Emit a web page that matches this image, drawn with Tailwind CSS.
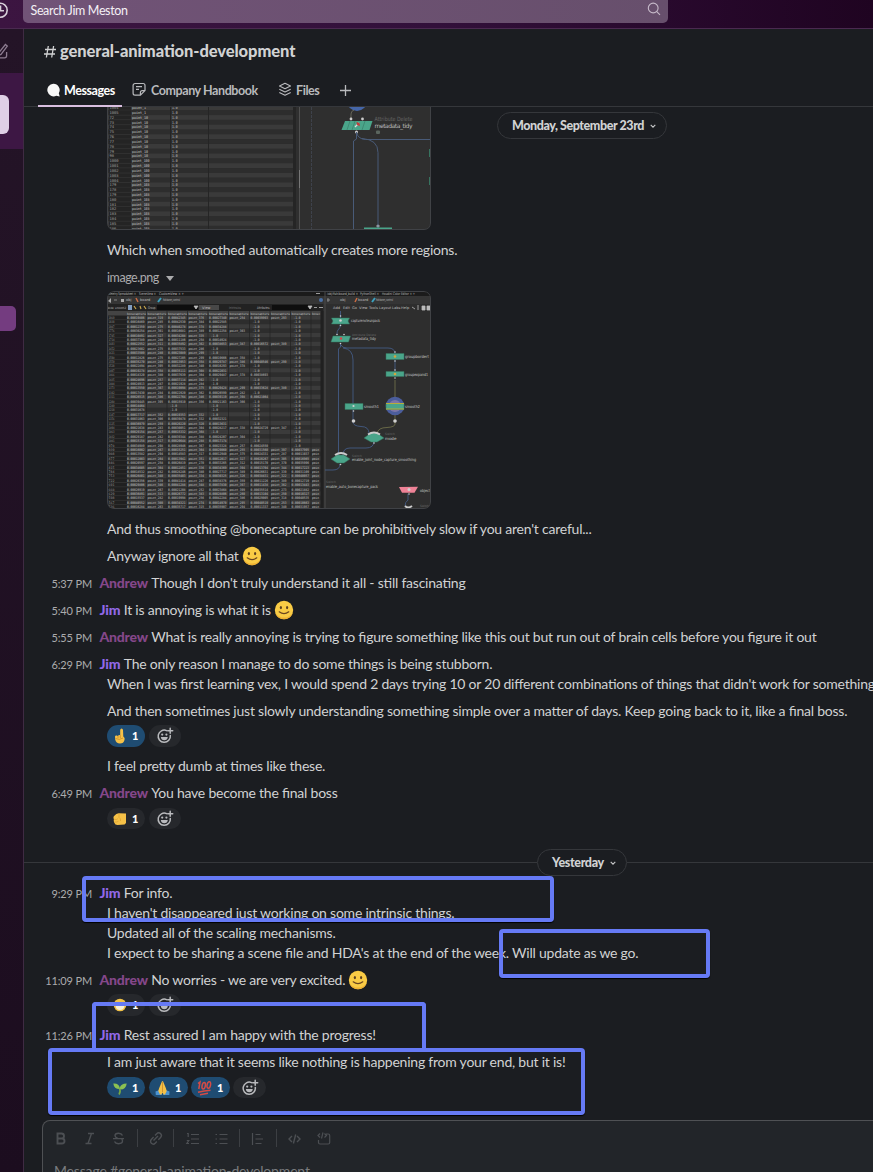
<!DOCTYPE html>
<html lang="en">
<head>
  <meta charset="UTF-8">
  <meta name="viewport" content="width=device-width, initial-scale=1.0">
  <title>general-animation-development</title>
  <script src="https://cdn.jsdelivr.net/npm/@tailwindcss/browser@4"></script>
</head>
<body class="bg-[#1b1d21] font-['Lato',sans-serif] text-[14px] leading-5 tracking-[-0.223px] text-[#d1d2d3] [font-feature-settings:'liga'] [&_svg]:tracking-normal [&_svg]:flex-none">
  <!-- Icons and emoji used more than once -->
  <svg class="hidden">
    <symbol id="smile" viewBox="0 0 20 20">
      <circle cx="10" cy="10" r="9.2" fill="#f9cb45"/>
      <path d="M1.300 13a9.200 9.200 0 0 0 17.400 0 10.500 10.500 0 0 1-17.400 0z" fill="#eeb033"/>
      <ellipse cx="6.9" cy="7.6" rx="1.1" ry="1.7" fill="#5c4020"/><ellipse cx="13.1" cy="7.6" rx="1.1" ry="1.7" fill="#5c4020"/>
      <path d="M5.2 11.8q4.8 3.800 9.600 0" fill="none" stroke="#6a4520" stroke-width="1.2" stroke-linecap="round"/>
    </symbol>
    <symbol id="add" viewBox="0 0 18 18">
      <g fill="none" stroke="#b9babd" stroke-width="1.5" stroke-linecap="round">
        <path d="M10.6 3.6A6.1 6.1 0 1 0 14.3 8.4"/><path d="M14.2 1.2v5M11.7 3.7h5"/>
      </g>
      <circle cx="6.2" cy="7.6" r="1.1" fill="#b9babd"/><circle cx="10.4" cy="7.6" r="1.1" fill="#b9babd"/>
      <path d="M4.8 10h7q-.5 3.3-3.5 3.3T4.8 10z" fill="#b9babd"/>
    </symbol>
    <symbol id="chev" viewBox="0 0 8 8"><path d="M1.7 2.8 4 5.1l2.3-2.3" fill="none" stroke="#c5c6c8" stroke-width="1.1"/></symbol>
  </svg>

  <div class="relative w-[873px] h-[1172px] overflow-hidden flex flex-col">
    <!-- Top bar -->
    <header class="flex-none h-[29px] flex items-start border-b border-[#4a2a50] bg-linear-to-r from-[#3c1541] via-[#32103a] to-[#1f0421]">
      <div class="w-[23px] flex-none">
        <svg class="block w-[9px] h-[22px]" viewBox="0 0 9 22" fill="none" stroke="#d8cfda" stroke-width="1.6"><path d="M-1 3.3A7 7 0 1 1-1 17.1M.5 5.5v5.2H4"/></svg>
      </div>
      <div class="w-[645px] h-[23px] flex items-start justify-between rounded-b-[5px] bg-linear-to-r from-[#715377] to-[#674f6c] pl-[7.5px] pr-[7px] text-[12.5px] tracking-[-0.36px] text-[#f4f0f5]">
        <span class="pt-[1px]">Search Jim Meston</span>
        <svg class="mt-[2px] w-[14px] h-[14px]" viewBox="0 0 14 14" fill="none" stroke="#c6bac9" stroke-width="1.1"><circle cx="6.2" cy="6" r="4.9"/><path d="m9.8 9.7 3.2 3.2"/></svg>
      </div>
    </header>

    <div class="flex-1 min-h-0 flex">
      <!-- Sidebar edge -->
      <aside class="w-6 flex-none flex flex-col border-r border-[#3f2b43] bg-linear-to-b from-[#241427] to-[#1c0d1f]">
        <div class="h-11 flex-none">
          <svg class="w-[10px] h-[20px] mt-[13px]" viewBox="0 0 10 20" fill="none" stroke="#8d7c91" stroke-width="1.3"><path d="M0 15.8h4.6a2 2 0 0 0 2-2V10M-1 10.500 5.400 2.500l1.900 1.600L1 12.400l-2 .6"/></svg>
        </div>
        <div class="h-[76px] flex-none bg-[#3d1744] pt-[22px]"><div class="w-[9px] h-[39px] rounded-r-[6px] bg-[#dfcfe6]"></div></div>
        <div class="mt-[157px] w-4 h-[25px] rounded-r-[5px] bg-[#743c80]"></div>
      </aside>

      <main class="flex-1 min-w-0 flex flex-col">
        <!-- Channel header -->
        <div class="flex-none h-[46px] pl-5 pt-[11px] flex items-start text-[16.5px] leading-[22px] text-[#d1d2d3]">
          <svg class="w-3 h-[22px] mr-1" viewBox="0 0 12 22" fill="none" stroke="#d1d2d3" stroke-width="1.3"><path d="M4.300 6 2.400 17.500M9.600 6 7.700 17.500M1 9.500h11M0 14h11"/></svg>
          <h1 class="font-black tracking-[-0.08px]">general-animation-development</h1>
        </div>
        <nav class="flex-none h-8 pl-[14px] flex border-b border-[#35373b] text-[12.5px] tracking-[-0.42px] font-bold text-[#b9babd]">
          <div class="w-[84px] h-8 pl-2 pt-[6px] flex border-b-2 border-[#d9bfe0] text-white">
            <svg class="w-[15px] h-[15px] mt-[2px] mr-[3px]" viewBox="0 0 15 15"><path d="M7.3.8a6.3 6.3 0 0 1 5.5 9.5l.9 3.2-3.4-.7A6.3 6.3 0 1 1 7.3.8z" fill="#f8f8f8"/></svg>
            <span>Messages</span>
          </div>
          <div class="w-[136px] pt-[6px] pl-[10px] flex">
            <svg class="w-[15px] h-[15px] mt-[1px] mr-1" viewBox="0 0 15 15" fill="none" stroke="#b9babd" stroke-width="1.2"><path d="M13 8.600V3.400A1.900 1.900 0 0 0 11.100 1.500H3A1.900 1.900 0 0 0 1.100 3.400v7.800A1.900 1.900 0 0 0 3 13.100h5.400zM13 8.600h-2.700a1.900 1.900 0 0 0-1.900 1.900v2.600M4 4.600h6M4 7.400h3"/></svg>
            <span class="whitespace-nowrap">Company Handbook</span>
          </div>
          <div class="w-[62px] pt-[6px] pl-[20px] flex">
            <svg class="w-[14px] h-[15px] mt-[1px] mr-1" viewBox="0 0 14 15" fill="none" stroke="#b9babd" stroke-width="1.1" stroke-linejoin="round"><path d="M7 1.2 12.5 4 7 6.8 1.5 4zM1.3 7.2 7 10l5.7-2.8M1.3 10.4 7 13.2l5.7-2.8"/></svg>
            <span>Files</span>
          </div>
          <svg class="w-[13px] h-[13px] mt-[9px] ml-[18.5px]" viewBox="0 0 13 13" fill="none" stroke="#b9babd" stroke-width="1.3"><path d="M6.5 1v11M1 6.5h11"/></svg>
        </nav>

        <!-- Messages -->
        <section class="flex-1 min-h-0 flex flex-col whitespace-nowrap overflow-hidden">
          <svg class="ml-[83px] block w-[324px] h-[123px] rounded-b-[7px]" viewBox="107 107 324 123">
            <rect x="107" y="107" width="324" height="123" fill="#2f2f2f"/>
            <g id="rows-top"></g>
            <path d="M294.5 107v123" stroke="#252525" stroke-width="3"/><path d="M299.5 107v123" stroke="#505050"/>
            <path d="M311.5 107v123" stroke="#3e424b" stroke-dasharray="3 1"/>
            <circle cx="357" cy="101" r="10" fill="#4566a8"/>
            <path d="M351 118v-4q0-3 3-4" fill="none" stroke="#747363" stroke-width=".8"/>
            <path d="M345 121h27.500l-3 9h-28z" fill="#4aa58a"/><path d="m350 121-3 9m8-9-3 9m13-9-3 9" stroke="#3d8b74"/>
            <path d="m355 127 4-4" stroke="#ddd" stroke-width="1.3"/><path d="m356.500 122 3 1 .5 3-3-1z" fill="#c43b3b"/>
            <g fill="#ccc"><circle cx="351" cy="119" r="1.400"/><circle cx="362.500" cy="119" r="1.400"/><circle cx="356.500" cy="132" r="1.500"/><circle cx="378" cy="226" r="1.500"/></g>
            <path d="M356.500 132v7l-3 2v89M356.500 132q1 7 9 7.500h65M362 138.500q16 1 16 14V228" fill="none" stroke="#495b78" stroke-width="1"/>
            <text x="374.500" y="121" font-size="5.800" fill="#666" font-family="DejaVu Sans" textLength="38" lengthAdjust="spacingAndGlyphs">Attribute Delete</text>
            <text x="374.500" y="127.500" font-size="6" fill="#bbb" font-family="DejaVu Sans" textLength="38">metadata_tidy</text>
            <rect x="376" y="130.500" width="4" height="3.500" rx="1" fill="#5b665f"/>
            <path d="M364 228.500h28" stroke="#4aa58a" stroke-width="2"/><path d="M429.500 149v8m0 20v8" stroke="#37735f"/>
            <path d="M299.500 170v18" stroke="#777"/>
            <path d="M107.500 107v116q0 6.500 6.500 6.500h310q6.500 0 6.500-6.500V107" fill="none" stroke="#404246"/>
          </svg>

          <p class="mt-[10px] pl-[83px]">Which when smoothed automatically creates more regions.</p>
          <div class="mt-2 pl-[83px] h-[23px] flex text-[12.5px] tracking-[-0.45px] text-[#ababad]">image.png
            <svg class="w-2 h-[20px] ml-[7px]" viewBox="0 0 8 20"><path d="M0 8h8l-4 5z" fill="#ababad"/></svg>
          </div>
          <svg class="ml-[83px] block w-[324px] h-[218px] rounded-[7px]" viewBox="107 291 324 218">
            <rect x="107" y="291" width="324" height="218" fill="#2e2e2e"/>
            <rect x="107" y="291" width="324" height="5" fill="#1b1b1b"/>
            <rect x="107" y="296" width="324" height="8" fill="#353535"/>
            <rect x="107" y="304" width="216" height="7" fill="#222"/>
            <rect x="157" y="305" width="41" height="5" fill="#0e0e0e"/><rect x="199" y="305" width="20" height="5" fill="#484848"/><rect x="272" y="305" width="38" height="5" fill="#0e0e0e"/>
            <g font-family="DejaVu Sans" font-size="3.600" fill="#bbb">
              <text x="109" y="295" textLength="27" lengthAdjust="spacingAndGlyphs">ometry Spreadsheet ×</text><text x="139" y="295" textLength="17" lengthAdjust="spacingAndGlyphs">SceneView ×</text><text x="159" y="295" textLength="25" lengthAdjust="spacingAndGlyphs">CustomView × +</text>
              <text x="126" y="301">obj</text><text x="140" y="301">board</text><text x="163" y="301" textLength="17" lengthAdjust="spacingAndGlyphs">fishbone_control</text>
              <text x="107" y="309" font-size="3" textLength="19" lengthAdjust="spacingAndGlyphs">Node: smooth2</text><text x="148" y="309" textLength="8" lengthAdjust="spacingAndGlyphs">Group:</text><text x="202" y="309">View</text><text x="229" y="309" textLength="12" lengthAdjust="spacingAndGlyphs" fill="#777">Intrinsics</text><text x="257" y="309" textLength="13" lengthAdjust="spacingAndGlyphs">Attributes:</text>
              <text x="327" y="295" textLength="31" lengthAdjust="spacingAndGlyphs">/obj/fish/board_build ×</text><text x="360" y="295" textLength="19" lengthAdjust="spacingAndGlyphs">PythonShell ×</text><text x="382" y="295" textLength="33" lengthAdjust="spacingAndGlyphs">Houdini Color Editor × +</text>
              <text x="340" y="301">obj</text><text x="358" y="301">board</text><text x="376" y="301" textLength="17" lengthAdjust="spacingAndGlyphs">fishbone_control</text>
              <text y="308.500"><tspan x="333">Add</tspan><tspan x="343">Edit</tspan><tspan x="352">Go</tspan><tspan x="359">View</tspan><tspan x="369">Tools</tspan><tspan x="379">Layout</tspan><tspan x="392">Labs</tspan><tspan x="401">Help</tspan></text>
            </g>
            <path d="m108 301 3-3v5zM121 299h3v3h-3z" fill="#aaa"/><path d="m114 300h3m210 0h3m-2-2v4" stroke="#999" stroke-width=".8"/>
            <path d="m136 298 2 4m219-4-2 4" stroke="#c96b42" stroke-width="1.500"/><path d="m158 302 3-4m211 4 3-4" stroke="#3ba0bd" stroke-width="2"/>
            <rect x="128" y="305" width="4" height="5" fill="#829dc0"/><path d="m134 306 2 3m4-3 1 3m3-3 2 3" stroke="#c6a64e" stroke-width="1.200"/>
            <path d="M194 306h4l-2 3zM308 306h4l-2 3zM314 307.500h3M319 307.500h4M316 293.500h4M412 307l3 2M418 305v5M422 306h3v4h-3zM427 306h3v4h-3z" fill="#bbb" stroke="#bbb" stroke-width=".8"/>
            <circle cx="321" cy="300" r="2" fill="#496fa6"/>
            <g id="rows-mid"></g>
            <path d="M322 311v198" stroke="#202020" stroke-width="3"/><path d="M325 291v218" stroke="#4b4b4b"/>
            <g fill="none" stroke="#445b85" stroke-width=".9">
              <path d="M340.500 311v13q0 4-2.500 6-1 1-1 4M340.500 343v4l-2 2v107M341 345q1 3 6 3h41q7 0 7 6M343 348q10 1 10 12v62q0 4 8 4.500 8 0 8 7M374 441q0 7-8 7h-16q-7 0-7 7M340 464q0 6-7 6h-8M408 494v6q-3 2-3 6M395 360v14"/>
              <path d="M395 380v44q0 3-8 3.500-9 0-10 6" stroke="#6d6d4a"/>
            </g>
            <circle cx="395" cy="406" r="9.300" fill="#4b5d9c"/><circle cx="395" cy="406" r="6" fill="#7c75a7"/>
            <g fill="#4aa58a" stroke="#35745f" stroke-width=".5">
              <path d="M331.500 318h18l-1.500 3 1.500 3h-18l1.500-3zM333 336h17.500l-2 6H331zM386 353.500h18v6h-18zM386 371.500h18v5h-18zM345 403.500h18v6h-18zM386 403.500h18v6h-18zM364 438l7-5h6l7 5-7 4h-6zM331 459l6-4h7l6 4-6 4h-7z"/>
            </g>
            <path d="M386 403.500h18M386 409h18" stroke="#b9ad38"/>
            <path d="m399 487 19-.3-3.500 6H402z" fill="#ee8296"/>
            <path d="M368 434.500q6-4 12 0M335 455q6-4 12 0M405 506q3 3 7 0" fill="none" stroke="#ccc" stroke-width="2"/>
            <g fill="#d0d0d0">
              <circle cx="340.500" cy="316" r=".8"/><circle cx="340.500" cy="325.500" r=".8"/><circle cx="337" cy="334.500" r=".8"/><circle cx="344" cy="334.500" r=".8"/><circle cx="340.500" cy="343.500" r=".8"/>
              <circle cx="395" cy="352" r=".8"/><circle cx="395" cy="361" r=".8"/><circle cx="395" cy="370" r=".8"/><circle cx="395" cy="378" r=".8"/><circle cx="353.500" cy="411" r=".8"/>
              <circle cx="353.500" cy="421" r="1.800"/><circle cx="395" cy="421" r="1.800"/><circle cx="374" cy="443" r=".8"/><circle cx="340.500" cy="464.500" r=".8"/><circle cx="409" cy="494" r=".8"/>
              <circle cx="340.500" cy="320.500" r="1.300"/><circle cx="353.500" cy="406" r="1.100"/><circle cx="409" cy="489.500" r="1.500"/>
            </g>
            <g fill="#d6a63d"><circle cx="395" cy="356.500" r="1.300"/><circle cx="395" cy="374" r="1.300"/></g><circle cx="341" cy="338.500" r="1.300" fill="#d14b4b"/>
            <g font-family="DejaVu Sans" font-size="4" fill="#c5c5c5">
              <text x="351" y="322" textLength="29" lengthAdjust="spacingAndGlyphs">capturenoteunpack</text><text x="352" y="340" textLength="24" lengthAdjust="spacingAndGlyphs">metadata_tidy</text>
              <text x="405" y="358" textLength="24" lengthAdjust="spacingAndGlyphs">groupbordert</text><text x="405" y="375.500" textLength="23" lengthAdjust="spacingAndGlyphs">groupexpand1</text>
              <text x="364" y="407.500" textLength="15" lengthAdjust="spacingAndGlyphs">smooth1</text><text x="405" y="407.500" textLength="15" lengthAdjust="spacingAndGlyphs">smooth2</text><text x="385" y="439.500">mode</text>
              <text x="352" y="461" textLength="64" lengthAdjust="spacingAndGlyphs">enable_joint_node_capture_smoothing</text><text x="326" y="487.500" textLength="52" lengthAdjust="spacingAndGlyphs">enable_auto_bonecapture_pack</text><text x="420" y="491.500" textLength="10" lengthAdjust="spacingAndGlyphs">object</text>
            </g>
            <g font-family="DejaVu Sans" font-size="3" fill="#666"><text x="352" y="336">Attribute Delete</text><text x="385" y="435">Switch</text><text x="352" y="457">Switch</text><text x="326" y="483">Switch</text><text x="420" y="507" textLength="9">Switch</text></g>
            <rect x="107.500" y="291.500" width="323" height="217" rx="6.500" fill="none" stroke="#404246"/>
          </svg>

          <div class="mt-[10px] flex flex-col gap-[7px] [&_p]:h-5 [&_p]:flex [&_p]:items-baseline [&_p_svg]:self-center [&_p_svg]:ml-[3px] [&_time]:w-[68px] [&_time]:mr-[7.5px] [&_time]:text-right [&_time]:text-[11px] [&_time]:tracking-[-0.15px] [&_time]:text-[#ababad] [&_b]:font-black [&_b]:mr-[3.500px]">
            <p class="pl-[83px]">And thus smoothing @bonecapture can be prohibitively slow if you aren't careful...</p>
            <p class="pl-[83px]">Anyway ignore all that <svg class="w-5 h-5"><use href="#smile"/></svg></p>
            <p><time>5:37 PM</time><b class="text-[#85478a]">Andrew</b> Though I don't truly understand it all - still fascinating</p>
            <p><time>5:40 PM</time><b class="text-[#9168e8]">Jim</b> It is annoying is what it is <svg class="w-5 h-5"><use href="#smile"/></svg></p>
            <p><time>5:55 PM</time><b class="text-[#85478a]">Andrew</b> What is really annoying is trying to figure something like this out but run out of brain cells before you figure it out</p>
            <div>
              <p><time>6:29 PM</time><b class="text-[#9168e8]">Jim</b> The only reason I manage to do some things is being stubborn.</p>
              <p class="pl-[83px]">When I was first learning vex, I would spend 2 days trying 10 or 20 different combinations of things that didn't work for something</p>
            </div>
            <div>
              <p class="pl-[83px]">And then sometimes just slowly understanding something simple over a matter of days. Keep going back to it, like a final boss.</p>
              <div class="mt-1 mb-[2px] pl-[83px] flex gap-1 text-[11px] font-black text-white">
                <div class="w-[38px] h-[22px] rounded-full bg-[#1f4c72] flex items-center pl-[6px] gap-[5px]">
                  <svg class="w-[14px] h-4" viewBox="0 0 14 16"><path d="M7.200 7V2q.2-1.500 1.400-1.500T10 2l.3 6.500q2 1 1.200 3.500-.8 3.500-4.500 3.500-4 0-4.800-4L2 8.500q.3-1.300 1.600-1L5 8q.5-1.500 2.200-1z" fill="#f6c147"/><path d="M5 8v2m2.300-3v3m-4.800.5q4 2 7.500-.5" fill="none" stroke="#c88c29" stroke-width=".8"/></svg><span>1</span>
                </div>
                <div class="w-8 h-[22px] rounded-full bg-[#26282c] flex items-center justify-center"><svg class="w-[18px] h-[18px]"><use href="#add"/></svg></div>
              </div>
            </div>
            <p class="pl-[83px]">I feel pretty dumb at times like these.</p>
            <div>
              <p><time>6:49 PM</time><b class="text-[#85478a]">Andrew</b> You have become the final boss</p>
              <div class="mt-[5px] pl-[83px] flex gap-1 text-[11px] font-black text-white">
                <div class="w-[38px] h-[21px] rounded-full bg-[#26282c] flex items-center pl-[6px] gap-[5px]">
                  <svg class="w-[14px] h-4" viewBox="0 0 14 16"><path d="M.8 5.200Q3.500 2 6 2.200L13 2.500v9.500l-1.500 1.500-7 .5q-2.500 0-3.200-2.200Q.3 10 .9 8.500 0 6.800.8 5.200z" fill="#f6c147"/><path d="M1 8.300q2.500.7 4-.6M1.500 11q2.500.5 4-.8M6 3v3.500q2 1 1.500 3.500" fill="none" stroke="#d59a2c" stroke-width=".6"/></svg><span>1</span>
                </div>
                <div class="w-8 h-[21px] rounded-full bg-[#26282c] flex items-center justify-center"><svg class="w-[18px] h-[18px]"><use href="#add"/></svg></div>
              </div>
            </div>

            <div class="mt-[13px] h-[27px] flex items-center">
              <div class="w-[513px] border-t border-[#35373b]"></div>
              <div class="w-[90px] h-[27px] rounded-full border border-[#35373b] flex items-center pl-[14px] text-[12.5px] tracking-[-0.35px] font-black">Yesterday<svg class="w-2 h-2 ml-[5px]"><use href="#chev"/></svg></div>
              <div class="flex-1 border-t border-[#35373b]"></div>
            </div>

            <div>
              <p><time>9:29 PM</time><b class="text-[#9168e8]">Jim</b> For info.</p>
              <div class="pl-[83px]">
                <p>I haven't disappeared just working on some intrinsic things.</p>
                <p>Updated all of the scaling mechanisms.</p>
                <p>I expect to be sharing a scene file and HDA's at the end of the week. Will update as we go.</p>
              </div>
            </div>
            <div>
              <p><time>11:09 PM</time><b class="text-[#85478a]">Andrew</b> No worries - we are very excited. <svg class="w-5 h-5"><use href="#smile"/></svg></p>
              <div class="mt-1 mb-[2px] pl-[83px] flex gap-1 text-[11px] font-black text-white">
                <div class="w-[38px] h-[22px] rounded-full bg-[#26282c] flex items-center pl-[6px] gap-[5px]">
                  <svg class="w-[14px] h-[14px]" viewBox="0 0 14 14"><circle cx="7" cy="7" r="6.300" fill="#f3c347"/><path d="M2.500 7.500h9Q11 12 7 12T2.500 7.500z" fill="#f7efd8"/></svg><span>1</span>
                </div>
                <div class="w-8 h-[22px] rounded-full bg-[#26282c] flex items-center justify-center"><svg class="w-[18px] h-[18px]"><use href="#add"/></svg></div>
              </div>
            </div>
            <p><time>11:26 PM</time><b class="text-[#9168e8]">Jim</b> Rest assured I am happy with the progress!</p>
            <div>
              <p class="pl-[83px]">I am just aware that it seems like nothing is happening from your end, but it is!</p>
              <div class="mt-[5px] pl-[83px] flex gap-1 text-[11px] font-black text-white">
                <div class="w-[38px] h-[21px] rounded-full bg-[#1f4c72] flex items-center pl-[6px] gap-[5px]">
                  <svg class="w-[14px] h-4" viewBox="0 0 14 16"><path d="M6.500 9Q1 9 .3 3.500 6 3 6.800 8 7.500 3.500 13.700 3.500 13 9.500 7.500 9.500z" fill="#8cc152"/><path d="M6.500 8.500q1.500 3-.5 6" fill="none" stroke="#77a843" stroke-width="1.600"/></svg><span>1</span>
                </div>
                <div class="w-[39px] h-[21px] rounded-full bg-[#1f4c72] flex items-center pl-[6px] gap-[5px]">
                  <svg class="w-[15px] h-4" viewBox="0 0 15 16"><path d="m.5 11.500 4-1.500 2.500 5H.8zM14.500 11.500l-4-1.500L8 15h6.300z" fill="#4b93d1"/><path d="M7 1.200 4 8.500 3.300 11 5 14.500h1.500l1-2 1 2H10l1.700-3.500L11 8.500 8 1.200z" fill="#f6c147"/><path d="M7.500 2v10" stroke="#c88c29" stroke-width=".8"/></svg><span>1</span>
                </div>
                <div class="w-[39px] h-[21px] rounded-full bg-[#1f4c72] flex items-center pl-[6px] gap-[5px] -ml-px">
                  <svg class="w-[15px] h-4" viewBox="0 0 15 16" fill="none" stroke="#d54b45" stroke-width="1.500"><path d="m1 3.500 2-1.500-1.200 7"/><ellipse cx="6.700" cy="5.700" rx="1.600" ry="3.300" transform="rotate(12 6.700 5.700)"/><ellipse cx="11.800" cy="5" rx="1.700" ry="3.300" transform="rotate(12 11.800 5)"/><path d="M1 12.300q6-1.500 12.500-2M3 14.800l8-1.500"/></svg><span>1</span>
                </div>
                <div class="w-[33px] h-[21px] rounded-full bg-[#26282c] flex items-center justify-center -ml-px"><svg class="w-[18px] h-[18px]"><use href="#add"/></svg></div>
              </div>
            </div>
          </div>
        </section>

        <!-- Composer -->
        <footer class="flex-none h-[52px] ml-[18px] -mr-3 rounded-t-[8px] border border-b-0 border-[#4f5154] bg-[#222529] overflow-hidden">
          <svg class="block w-[320px] h-[38px]" viewBox="43 1121 320 38" fill="none" stroke="#4c4f53" stroke-width="1.400">
            <path d="M57.500 1133.500h4a2.400 2.400 0 0 1 0 5h-4zM57.500 1138.500h4.500a2.500 2.500 0 0 1 0 5h-4.500z" stroke-width="1.900"/>
            <path d="M88 1133.500h6M85.500 1143.500h6M91.500 1133.500l-3.500 10"/>
            <path d="M122.500 1135.500q-1-2.200-4-2.200-3.500 0-3.500 2.400 0 1.600 2.500 2.300M113 1138.600h11M114.500 1141.500q1 2.200 4 2.200 4 0 4-2.600 0-1-.8-1.800"/>
            <path d="m153.500 1140.500 4.500-4.500M155 1135.500l1.700-1.800a2.600 2.600 0 0 1 3.900 3.700l-2.300 2.400M156.800 1141.500l-1.600 1.700a2.600 2.600 0 0 1-3.900-3.700l2.300-2.400"/>
            <path d="M137.500 1129v18M173.500 1129v18M239.500 1129v18M276.500 1129v18" stroke="#3c3f43" stroke-width="1"/>
            <path d="M191 1134.500h8M191 1139h8M191 1143.500h8M187 1133.500h1.200v3.500M186.800 1140.500h2l-2 3h2.200" stroke-width="1.200"/>
            <path d="M219.500 1134.500h8M219.500 1139h8M219.500 1143.500h8M215.500 1134.500h1.500M215.500 1139h1.500M215.500 1143.500h1.500" stroke-width="1.200"/>
            <path d="M252.500 1133v12M255.500 1134.500h5M255.500 1139h7.500M255.500 1143.500h6" stroke-width="1.200"/>
            <path d="m292 1136-3 3 3 3M297 1136l3 3-3 3M295.700 1134.500l-2.300 9"/>
            <path d="m320 1133.500-2 2 2 2M324.500 1133.500l2 2-2 2M323 1132.500l-1.500 6M326 1134h2.200a1.500 1.500 0 0 1 1.500 1.500v7a1.500 1.500 0 0 1-1.500 1.500H320a1.500 1.500 0 0 1-1.500-1.500v-2.500" stroke-width="1.200"/>
          </svg>
          <p class="pl-[11px] pt-[2px] leading-5 tracking-[-0.17px] text-[#7a7c7f] whitespace-nowrap">Message #general-animation-development</p>
        </footer>
      </main>
    </div>

    <!-- Floating date pill -->
    <div class="absolute left-[497px] top-[112px] w-[170px] h-[27px] rounded-full border border-[#35373b] bg-[#1b1d21] flex items-center pl-[14px] pt-px text-[12.5px] tracking-[-0.43px] font-black whitespace-nowrap">Monday, September 23rd<svg class="w-2 h-2 ml-[5px]"><use href="#chev"/></svg></div>

    <!-- Highlight boxes -->
    <div class="absolute left-[82px] top-[876px] w-[472px] h-[46px] rounded-[4px] border-4 border-[#667af5] shadow-[0_1px_1px_#000]"></div>
    <div class="absolute left-[499px] top-[929px] w-[211px] h-[49px] rounded-[4px] border-4 border-[#667af5] shadow-[0_1px_1px_#000]"></div>
    <div class="absolute left-[92px] top-[1002px] w-[334px] h-[47px] rounded-t-[4px] border-4 border-b-0 border-[#667af5]"></div>
    <div class="absolute left-[48px] top-[1048px] w-[537px] h-[67px] rounded-[4px] border-4 border-[#667af5] shadow-[0_1px_1px_#000]"></div>
  </div>

  <script>
const cell = (x, y, text, color, size, length) =>
  `<text x="${x}" y="${y}" font-size="${size}" fill="${color}" font-family="DejaVu Sans Mono"${length ? ` textLength="${length}" lengthAdjust="spacingAndGlyphs"` : ""}>${text}</text>`;

// upper spreadsheet: index, point name, weight
const topIds = ["1004", "1005", "72", "73", "74", "75", "76", "77", "78", "79", "98", "1000", "1001", "1002", "1003", "1004", "179", "178", "179", "180", "181", "182", "183", "184", "185", "186"];
let top1 = "";
topIds.forEach((id, i) => {
  const y = 105.4 + i * 4.82;
  top1 += `<rect x="108" y="${y}" width="186" height="4.82" fill="${i % 2 ? "#2d2d2d" : "#3a3a3a"}"/>`;
  top1 += `<rect x="109" y="${y + 0.4}" width="22" height="4" fill="#242424"/>`;
  const name = i < 2 ? "point_1" : i < 11 ? "point_10" : i < 16 ? "point_100" : "point_103";
  top1 += cell(109.5, y + 3.8, id, "#a0a0a0", 3.8) + cell(132, y + 3.8, name, "#cfcfcf", 3.8, i < 2 ? 14 : i < 11 ? 16 : 17.5) + cell(172, y + 3.8, "1.0", "#cfcfcf", 3.8, 5.5);
});
top1 += `<path d="M170.5 107v123M208.5 107v123" stroke="#252525"/>`;
document.getElementById("rows-top").innerHTML = top1;

// lower spreadsheet: alternating weight / point columns
let seed = 7;
const rnd = (n) => { seed = (seed * 1103515245 + 12345) % 2147483648; return Math.floor(seed / 65536) % n; };
const cols = [127, 147.5, 168, 188.5, 209, 229.5, 250.5, 271, 291.5, 312];
let mid = "";
for (let i = 0; i < 45; i++) {
  const y = 311 + i * 4.4;
  mid += `<rect x="108" y="${y}" width="213" height="4.4" fill="${i == 0 ? "#444" : i % 2 ? "#3b3b3b" : "#2d2d2d"}"/>`;
  if (i == 0) {
    cols.forEach((x, c) => { mid += cell(x, y + 3.5, c == 9 ? "bonec" : "bonecapture", "#bbb", 3.2, c == 9 ? 8 : 19); });
    continue;
  }
  mid += `<rect x="108" y="${y + 0.4}" width="19" height="3.6" fill="#202020"/>` + cell(108.5, y + 3.5, 1900 - i * 31, "#909090", 3.3, 6);
  // each row is filled up to some column, and shows -1.0 after it
  const filled = i > 30 ? 10 : i == 21 || i == 22 ? 1 : 4 + rnd(5);
  cols.forEach((x, c) => {
    const full = c < filled;
    if (c % 2) {
      if (full) mid += cell(x, y + 3.5, c == 9 ? "poin" : "point_" + (250 + rnd(150)), "#c8c8c8", 3.4, c == 9 ? 7 : 15.5);
    } else {
      mid += cell(full ? x : x + 2, y + 3.5, full ? "0.000" + (10000 + rnd(89999)) : "-1.0", "#c8c8c8", 3.4, full ? 17.5 : 7);
    }
  });
}
for (const x of cols.slice(1)) mid += `<path d="M${x - 1} 311v198" stroke="#232323" stroke-width=".7"/>`;
document.getElementById("rows-mid").innerHTML = mid;
  </script>
</body>
</html>
